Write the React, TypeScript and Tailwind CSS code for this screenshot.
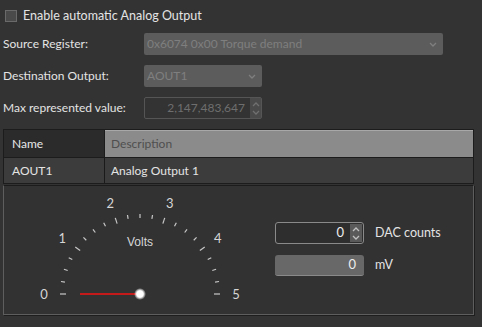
import React from "react";

const font = { fontFamily: "'Segoe UI', Lato, 'Open Sans', sans-serif" };

function Chevron({ up = false, cls = "" }: { up?: boolean; cls?: string }) {
  return (
    <svg width="8" height="5" viewBox="0 0 8 5" className={cls}>
      <path d={up ? "M1 4 L4 1 L7 4" : "M1 1 L4 4 L7 1"} fill="none" stroke="currentColor" strokeWidth="1.3" />
    </svg>
  );
}

function Gauge() {
  const cx = 136;
  const cy = 108;
  const ticks = [];
  for (let i = 0; i <= 20; i++) {
    const a = (Math.PI * (180 - i * 9)) / 180;
    const major = i % 4 === 0;
    const r1 = major ? 74 : 76;
    const r2 = 80;
    ticks.push(
      <line
        key={i}
        x1={cx + r1 * Math.cos(a)}
        y1={cy - r1 * Math.sin(a)}
        x2={cx + r2 * Math.cos(a)}
        y2={cy - r2 * Math.sin(a)}
        stroke="#c8c8c8"
        strokeWidth="1.2"
      />
    );
  }
  const labels = [0, 1, 2, 3, 4, 5].map((v) => {
    const a = (Math.PI * (180 - v * 36)) / 180;
    const r = 96;
    return (
      <text
        key={v}
        x={cx + r * Math.cos(a)}
        y={cy - r * Math.sin(a)}
        fill="#d6d6d6"
        fontSize="13"
        textAnchor="middle"
        dominantBaseline="central"
        style={font}
      >
        {v}
      </text>
    );
  });
  return (
    <svg width="250" height="128" viewBox="0 0 250 128" className="shrink-0">
      <defs>
        <radialGradient id="glow">
          <stop offset="0%" stopColor="#ffffff" />
          <stop offset="55%" stopColor="#ffffff" />
          <stop offset="100%" stopColor="#ffffff" stopOpacity="0" />
        </radialGradient>
      </defs>
      {ticks}
      {labels}
      <text x={cx} y={56} fill="#d6d6d6" fontSize="12" textAnchor="middle" dominantBaseline="central" style={{ fontFamily: "'Liberation Sans', Arial, sans-serif" }}>
        Volts
      </text>
      <line x1={76} y1={cy} x2={cx} y2={cy} stroke="#c41a1a" strokeWidth="2.2" />
      <circle cx={cx} cy={cy} r={6} fill="url(#glow)" />
    </svg>
  );
}

export default function App() {
  return (
    <div className="w-[482px] h-[327px] bg-[#333333] text-[12px] text-[#e4e4e4] flex flex-col overflow-hidden" style={font}>
      <div className="flex items-center h-[12px] mt-[10px] pl-[5px]">
        <div className="w-[12px] h-[12px] border border-[#6a6a6a] bg-[#4a4a4a]" />
        <span className="ml-[6px] text-[12.5px] leading-none">Enable automatic Analog Output</span>
      </div>

      <div className="flex flex-col gap-[10px] mt-[11px] pl-[3px]">
        <div className="flex items-center h-[22px]">
          <span className="w-[141px]">Source Register:</span>
          <div className="w-[299px] h-[22px] rounded-[2px] bg-[#5c5c5c] flex items-center justify-between pl-[3px] pr-[6px] text-[#7f7f7f]">
            <span>0x6074 0x00 Torque demand</span>
            <Chevron cls="text-[#7f7f7f]" />
          </div>
        </div>
        <div className="flex items-center h-[22px]">
          <span className="w-[141px]">Destination Output:</span>
          <div className="w-[118px] h-[22px] rounded-[2px] bg-[#5c5c5c] flex items-center justify-between pl-[3px] pr-[6px] text-[#7f7f7f]">
            <span>AOUT1</span>
            <Chevron cls="text-[#7f7f7f]" />
          </div>
        </div>
        <div className="flex items-center h-[22px]">
          <span className="w-[141px]">Max represented value:</span>
          <div className="w-[118px] h-[22px] rounded-[2px] border border-[#555555] bg-[#333333] flex items-stretch">
            <span className="flex-1 flex items-center justify-end pr-[5px] text-[#6e6e6e]">2,147,483,647</span>
            <div className="w-[11px] bg-[#4a4a4a] flex flex-col items-center justify-center gap-[3px] text-[#707070]">
              <Chevron up />
              <Chevron />
            </div>
          </div>
        </div>
      </div>

      <div className="mt-[10px] mx-[3px] w-[471px] border border-[#1c1c1c] flex flex-col">
        <div className="grid grid-cols-[101px_1fr] h-[27px]">
          <div className="bg-[#2b2b2b] flex items-center pl-[8px] text-[#e8e8e8] border-r border-[#1c1c1c]">Name</div>
          <div className="bg-[#8b8b8b] flex items-center pl-[6px] text-[#4f4f4f] border-t border-[#a8a8a8]">Description</div>
        </div>
        <div className="grid grid-cols-[101px_1fr] h-[26px] border-t border-[#1c1c1c]">
          <div className="bg-[#3c3c3c] flex items-center pl-[8px] border-r border-[#1a1a1a]">AOUT1</div>
          <div className="bg-[#3c3c3c] flex items-center pl-[6px]">Analog Output 1</div>
        </div>
      </div>

      <div className="mt-[1px] mx-[3px] w-[471px] h-[130px] border border-[#5e5e5e] border-t-[#1c1c1c] bg-[#323232] flex shadow-[1px_1px_0_#1e1e1e]">
        <Gauge />
        <div className="ml-[21px] mt-[36px] flex flex-col gap-[11px]">
          <div className="flex items-center">
            <div className="w-[89px] h-[22px] rounded-[3px] border border-[#8a8a8a] bg-[#2e2e2e] flex items-stretch">
              <span className="flex-1 flex items-center justify-end pr-[6px] text-[13px] text-[#eeeeee]">0</span>
              <div className="w-[12px] my-[1px] mr-[1px] bg-[#5a5a5a] flex flex-col items-center justify-center gap-[3px] text-[#c0c0c0]">
                <Chevron up />
                <Chevron />
              </div>
            </div>
            <span className="ml-[11px] text-[12.5px]">DAC counts</span>
          </div>
          <div className="flex items-center">
            <div className="w-[89px] h-[21px] rounded-[3px] bg-[#686868] border-b border-[#8a8a8a] flex items-center justify-end pr-[8px] text-[13px] text-[#eeeeee]">0</div>
            <span className="ml-[11px] text-[12.5px]">mV</span>
          </div>
        </div>
      </div>
    </div>
  );
}
